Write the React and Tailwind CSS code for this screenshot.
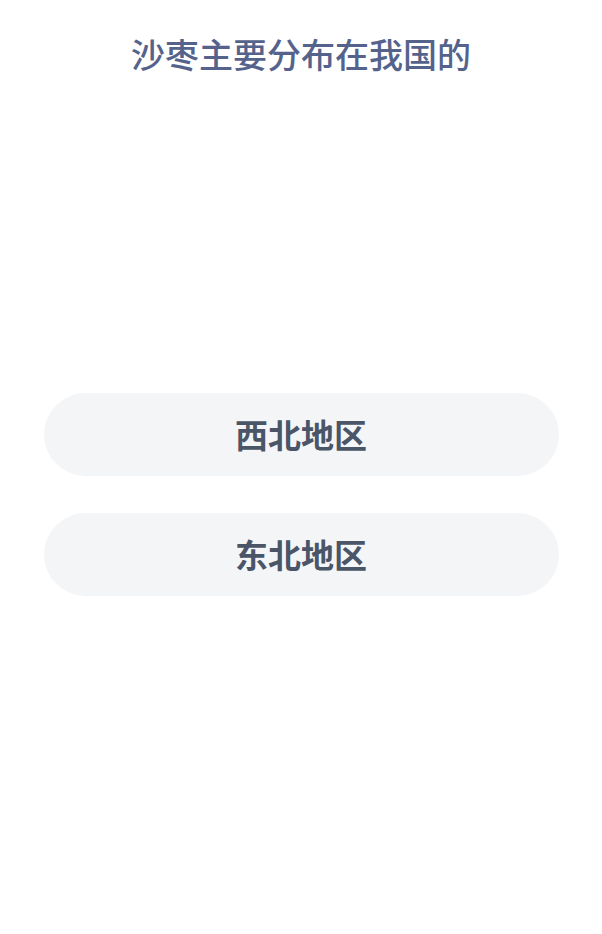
import React from "react";

const options = ["西北地区", "东北地区"];

export default function App() {
  return (
    <div
      className="w-[602px] h-[934px] bg-white flex flex-col items-center"
      style={{ fontFamily: '"Noto Sans CJK SC", "Noto Sans", sans-serif' }}
    >
      <h1 className="pt-[34px] text-[34px] leading-[40px] text-[#55638c] font-medium">
        沙枣主要分布在我国的
      </h1>

      <div className="mt-[319px] w-[515px] flex flex-col gap-[37px]">
        {options.map((opt) => (
          <button
            key={opt}
            className="h-[83px] w-full rounded-full bg-[#f4f5f7] text-[33px] font-semibold text-[#4b5568] flex items-center justify-center"
          >
            {opt}
          </button>
        ))}
      </div>
    </div>
  );
}
